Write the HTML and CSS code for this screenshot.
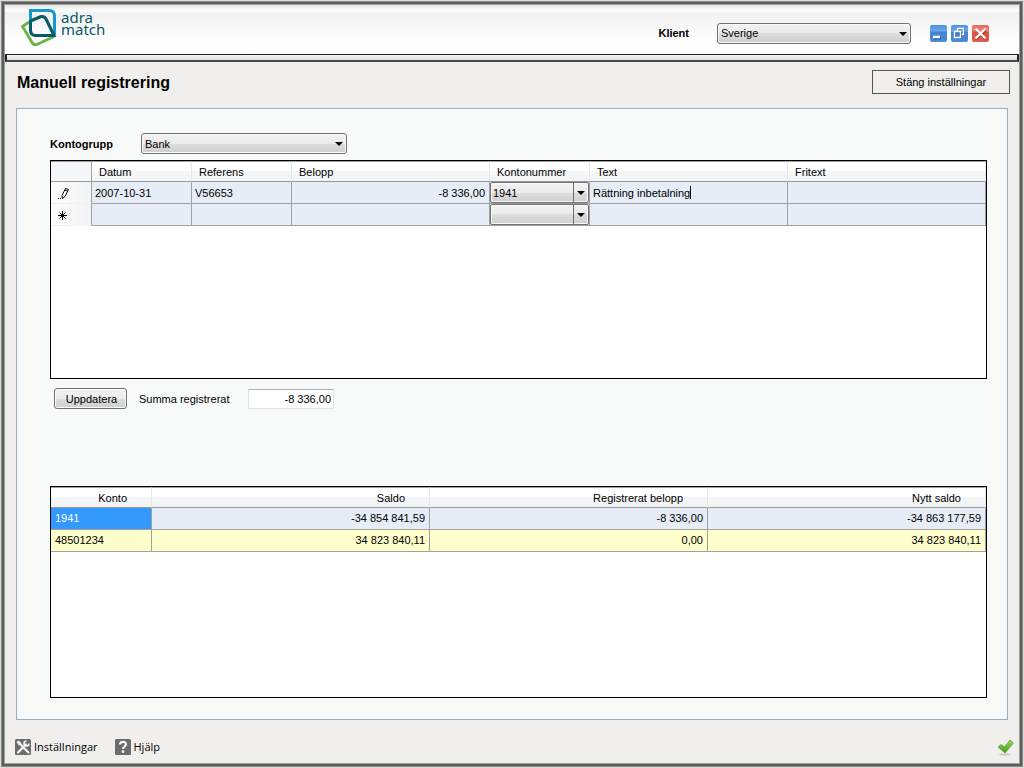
FILE: index.html
```html
<!DOCTYPE html>
<html lang="sv">
<head>
<meta charset="utf-8">
<meta name="viewport" content="width=device-width, initial-scale=1">
<title>Adra Match – Manuell registrering</title>
<link rel="stylesheet" href="styles.css">
</head>
<body>
<div class="window">
  <header class="topbar">
    <div class="logo">
      <svg class="logo-mark" viewBox="0 0 38 40" width="38" height="40" aria-hidden="true">
        <path d="M9 14 L2.500 18.500 L12 34.500 Q13.500 37.500 17 36.500 L34 28.500" fill="none" stroke="#69b445" stroke-width="2.800"/>
        <path d="M10.500 13 V2.500 H29 Q34.500 2.500 34.500 8 V27" fill="none" stroke="#1699c4" stroke-width="3"/>
        <path d="M10.500 13 L21 8.500 Q24.500 8 26 11 L34 27.500 H15 Q10.500 27 10.500 22 Z" fill="none" stroke="#075a68" stroke-width="3"/>
      </svg>
      <span class="logo-text"><span>adra</span><span>match</span></span>
    </div>
    <div class="client">
      <label class="bold-label" for="klient">Klient</label>
      <span class="combo combo-client"><select id="klient"><option>Sverige</option></select></span>
    </div>
    <div class="window-buttons">
      <button type="button" class="win-btn" aria-label="Minimera"><svg viewBox="0 0 17 17" width="17" height="17"><path d="M4 13.500h7" stroke="#24599e" stroke-width="2"/><path d="M3 12h7" stroke="#fff" stroke-width="2.500"/></svg></button>
      <button type="button" class="win-btn" aria-label="Återställ"><svg viewBox="0 0 17 17" width="17" height="17" fill="none"><path d="M7 6V4h6v6h-2M4 7.500h6v5H4z" stroke="#24599e" stroke-width="2" opacity=".6"/><path d="M6.500 6V3.500h6v6H11M3.500 6.500h6v6h-6z" stroke="#fff" stroke-width="1.400"/></svg></button>
      <button type="button" class="win-btn win-close" aria-label="Stäng"><svg viewBox="0 0 17 17" width="17" height="17"><path d="M4 5l10 10M14 5L4 15" stroke="#8e3028" stroke-width="2" opacity=".6"/><path d="M3.500 3.500l10 10M13.500 3.500l-10 10" stroke="#fff" stroke-width="2.200"/></svg></button>
    </div>
  </header>
  <div class="divider"></div>

  <div class="title-row">
    <h1>Manuell registrering</h1>
    <button type="button" class="close-settings">Stäng inställningar</button>
  </div>

  <main class="panel">
    <div class="group-row">
      <label class="bold-label" for="kontogrupp">Kontogrupp</label>
      <span class="combo combo-group"><select id="kontogrupp"><option>Bank</option></select></span>
    </div>

    <div class="grid grid-entries">
      <table>
        <colgroup><col class="col-marker"><col class="col-fixed"><col class="col-fixed"><col><col class="col-fixed"><col><col></colgroup>
        <thead>
          <tr><th class="corner"></th><th>Datum</th><th>Referens</th><th>Belopp</th><th>Kontonummer</th><th>Text</th><th>Fritext</th></tr>
        </thead>
        <tbody>
          <tr>
            <td class="marker"><svg viewBox="0 0 14 13" width="14" height="13" aria-hidden="true"><path d="M4 8.500L7.500 1.500l3 1L7 9.500l-2.500 2zM7 3L10 4.500" fill="#fff" stroke="#000"/><path d="M0 11.500h1M2 11.500h1" stroke="#000"/></svg></td>
            <td>2007-10-31</td><td>V56653</td><td class="num">-8 336,00</td>
            <td class="combo-cell"><span class="combo combo-split"><select aria-label="Kontonummer rad 1"><option>1941</option></select></span></td>
            <td><span class="edit"><input type="text" aria-label="Text" value="Rättning inbetalning"><span class="caret"></span></span></td>
            <td></td>
          </tr>
          <tr>
            <td class="marker"><svg viewBox="0 0 14 13" width="14" height="13" aria-hidden="true"><path d="M4.500 2v9M0 6.500h9M1.500 3.500l6 6M7.500 3.500l-6 6" stroke="#000"/></svg></td>
            <td></td><td></td><td></td>
            <td class="combo-cell"><span class="combo combo-split"><select aria-label="Kontonummer rad 2"><option></option></select></span></td>
            <td></td><td></td>
          </tr>
        </tbody>
      </table>
    </div>

    <div class="sum-row">
      <button type="button" class="update">Uppdatera</button>
      <label for="summa">Summa registrerat</label>
      <input class="sum" id="summa" type="text" value="-8 336,00" readonly>
    </div>

    <div class="grid grid-balances">
      <table>
        <colgroup><col class="col-key"><col><col><col></colgroup>
        <thead><tr><th>Konto</th><th>Saldo</th><th>Registrerat belopp</th><th>Nytt saldo</th></tr></thead>
        <tbody>
          <tr><td class="selected">1941</td><td class="num">-34 854 841,59</td><td class="num">-8 336,00</td><td class="num">-34 863 177,59</td></tr>
          <tr class="alt"><td>48501234</td><td class="num">34 823 840,11</td><td class="num">0,00</td><td class="num">34 823 840,11</td></tr>
        </tbody>
      </table>
    </div>
  </main>

  <footer class="footer">
    <button type="button" class="foot-btn">
      <svg viewBox="0 0 16 16" width="16" height="16" aria-hidden="true"><rect width="16" height="16" rx="1.500" fill="#6c6c6c"/><path d="M3 13.500L11 5.500M5 5l8.500 8.500" stroke="#f4f4f4" stroke-width="2.200" stroke-linecap="round"/><path d="M14 4.500a2.500 2.500 0 1 1-2.500-2.500" fill="none" stroke="#f4f4f4" stroke-width="1.700"/><path d="M1.500 3L3.500 1.500l3 2.500L4 6.500z" fill="#f4f4f4"/></svg>
      Inställningar
    </button>
    <button type="button" class="foot-btn">
      <svg viewBox="0 0 16 16" width="16" height="16" aria-hidden="true"><rect width="16" height="16" rx="1.500" fill="#6c6c6c"/><path d="M5 5.500C5 2 11 2 11 5.300C11 7.500 8 7.200 8 10" fill="none" stroke="#f4f4f4" stroke-width="2.200"/><circle cx="8" cy="12.700" r="1.400" fill="#f4f4f4"/></svg>
      Hjälp
    </button>
    <button type="button" class="foot-btn confirm" aria-label="OK">
      <svg viewBox="0 0 18 17" width="18" height="17"><defs><linearGradient id="g" x1="0" y1="0" x2="0" y2="1"><stop offset="0" stop-color="#a0dc62"/><stop offset="1" stop-color="#3c9713"/></linearGradient></defs><ellipse cx="8" cy="15.500" rx="6" ry="1" fill="#c6c6c2"/><path d="M1 8L4 5.500l3.500 2.500L13 1L16.500 4L8 14z" fill="url(#g)" stroke="#58a72b" stroke-width=".8"/></svg>
    </button>
  </footer>
</div>
</body>
</html>
```
FILE: styles.css
```css
* { box-sizing: border-box; }

body {
  margin: 0;
  padding: 1px;
  background: #dcdcdc;
  font: 11px/14px "Liberation Sans", Arial, sans-serif;
  color: #000;
}

button, input, select { font: inherit; color: inherit; margin: 0; }

.window {
  display: flex;
  flex-direction: column;
  min-height: calc(100vh - 2px);
  border: 1px solid #8b8d8b;
  box-shadow: inset 0 0 0 2px #5a5c5a, inset 0 0 0 3px #a0a1a0;
  padding: 3px;
  background: #f0efed;
}

.topbar {
  display: flex;
  align-items: center;
  height: 49px;
  padding: 0 30px 0 15px;
  background: linear-gradient(#e2e2e2, #fdfdfd 5px, #f1f1f1 9px, #fdfdfd 32px, #fff);
}

.logo { display: flex; gap: 3px; margin-right: auto; padding-bottom: 3px; }
.logo-mark { display: block; }
.logo-text { padding-top: 3px; font: 15px/12px "Noto Sans", sans-serif; color: #075a68; }
.logo-text span { display: block; }

.client { display: flex; align-items: center; gap: 28px; padding-top: 7px; }
.bold-label { font-weight: bold; }

.combo { position: relative; display: inline-block; height: 21px; }
.combo select {
  display: block;
  width: 100%;
  height: 100%;
  padding: 0 20px 0 3px;
  border: 1px solid #707070;
  border-radius: 3px;
  appearance: none;
  background: linear-gradient(#f2f2f2, #ebebeb 50%, #dddddd 50%, #cfcfcf);
  box-shadow: inset 0 0 0 1px #fafafa;
}
.combo::after {
  content: "";
  position: absolute;
  right: 4px;
  top: 9px;
  border: 4px solid transparent;
  border-top-color: #000;
  border-bottom: 0;
  pointer-events: none;
}
.combo-client { width: 194px; }
.combo-group { width: 206px; }

.window-buttons { display: flex; gap: 4px; padding: 7px 0 0 19px; }
.win-btn {
  width: 17px;
  height: 17px;
  padding: 0;
  border: 0;
  border-radius: 2px;
  background: linear-gradient(#4a91e0, #6aa9ee 6px, #4384d3 7px, #4b8cd8);
}
.win-btn svg { display: block; }
.win-close { background: linear-gradient(#e5695c, #ee8779 6px, #d9513f 7px, #de5f50); }

.divider {
  height: 8px;
  border: 1px solid #222;
  border-width: 1px 2px 2px;
  border-bottom-color: #4a4a4a;
  background: linear-gradient(#f6f6f6, #dedede);
}

.title-row {
  display: flex;
  align-items: center;
  justify-content: space-between;
  padding: 8px 9px 0 12px;
}
h1 { margin: 0; padding-top: 2px; font-size: 16px; line-height: 20px; }
.close-settings {
  width: 138px;
  height: 24px;
  border: 1px solid #555;
  background: #f0efed;
}

.panel {
  flex: 1;
  display: flex;
  flex-direction: column;
  margin: 14px 11px 0;
  padding: 24px 20px 21px 33px;
  border: 1px solid #9aaebb;
  background: #f8faf9;
}

.group-row { display: flex; align-items: center; margin-bottom: 6px; }
.group-row .bold-label { width: 91px; }

.grid { border: 1px solid #000; background: #fff; overflow: hidden; }
.grid-entries { flex: 219 1 0; }
.grid-balances { flex: 212 1 0; }

table { width: 100%; table-layout: fixed; border-collapse: separate; border-spacing: 0; }
.col-marker { width: 41px; }
.col-fixed { width: 100px; }
.col-key { width: 101px; }

th {
  height: 21px;
  padding: 2px 7px 0;
  border-top: 1px solid #a0a0a0;
  border-right: 1px solid #e6e7e9;
  border-bottom: 1px solid #999;
  background: linear-gradient(#fff 9px, #f6f7f8 9px, #f2f3f5);
  font-weight: normal;
  line-height: 13px;
  text-align: left;
}
.grid-balances th { padding-right: 24px; text-align: right; }
.corner { border-right-color: #a0a0a0; background: #f6f7f8; }

td {
  height: 22px;
  padding: 0 4px 0 3px;
  border-right: 1px solid #a0a0a0;
  border-bottom: 1px solid #a0a0a0;
  background: #e6edf7;
  white-space: nowrap;
}
.num { text-align: right; }
.marker {
  padding: 1px 0 0 7px;
  border-bottom-color: #f0f1f3;
  background: linear-gradient(90deg, #fdfdfd, #f2f3f5);
}
.marker svg { display: block; }
.alt td { background: #ffffcc; }
td.selected { background: #3399ff; color: #fff; }
.grid-balances td:first-child { padding-left: 4px; }

.combo-cell { padding: 0; }
.combo-split { display: block; }
.combo-split select { border-radius: 2px; padding-left: 2px; }
.combo-split::before {
  content: "";
  position: absolute;
  right: 15px;
  top: 1px;
  bottom: 1px;
  width: 1px;
  background: #707070;
}

.edit { display: flex; align-items: center; }
.edit input { width: 97px; height: 14px; padding: 0; border: 0; outline: 0; background: none; }
.caret { width: 1px; height: 13px; background: #000; }

.sum-row { display: flex; align-items: center; height: 107px; padding: 0 0 67px 4px; }
.update {
  width: 73px;
  height: 21px;
  margin-right: 12px;
  padding: 0 0 0 2px;
  border: 1px solid #707070;
  border-radius: 3px;
  background: linear-gradient(#f2f2f2, #ebebeb 50%, #dddddd 50%, #cfcfcf);
  box-shadow: inset 0 0 0 1px #fafafa;
}
.sum-row label { width: 109px; }
.sum {
  width: 86px;
  height: 20px;
  padding: 0 2px;
  border: 1px solid #e2e3ea;
  border-top-color: #abadb3;
  background: #fff;
  text-align: right;
}

.footer { display: flex; align-items: center; gap: 17px; height: 43px; padding: 11px 4px 0 10px; }
.foot-btn {
  display: flex;
  align-items: center;
  gap: 3px;
  padding: 0;
  border: 0;
  background: none;
  font: 11px/16px "Open Sans", "Noto Sans", sans-serif;
}
.confirm { margin-left: auto; }
```
